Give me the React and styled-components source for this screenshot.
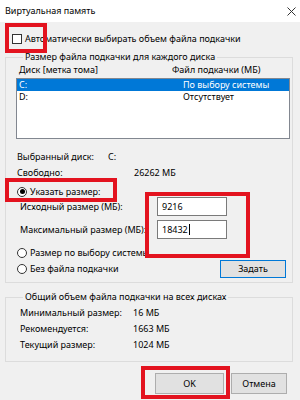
import React from "react";
import styled, { createGlobalStyle } from "styled-components";

const Global = createGlobalStyle`
  html, body { margin: 0; padding: 0; background: #f0f0f0; }
  body { font-family: "Noto Sans", "Open Sans", sans-serif; font-size: 9px; color: #000; }
  * { box-sizing: border-box; }
`;

const Dialog = styled.div`
  position: relative;
  width: 300px;
  height: 400px;
  overflow: hidden;
  background: #f0f0f0;
  display: flex;
  flex-direction: column;
`;

const TitleBar = styled.div`
  height: 22px;
  background: #fff;
  display: flex;
  align-items: center;
  justify-content: space-between;
  padding: 0 4px 0 5px;
  font-size: 9px;
  line-height: 12px;
  margin-bottom: -1px;
`;

const Body = styled.div`
  padding: 0 7px 0 5px;
  display: flex;
  flex-direction: column;
`;

const CheckRow = styled.label`
  display: flex;
  align-items: center;
  gap: 3px;
  height: 11px;
  margin-top: 12px;
  padding-left: 7px;
  line-height: 11px;
  white-space: nowrap;
`;

const CheckBox = styled.span`
  width: 10px;
  height: 10px;
  border: 1px solid #333;
  background: #fff;
  flex: none;
`;

const Group = styled.fieldset`
  margin: ${p => p.$mt}px 0 0 0;
  padding: ${p => p.$pt}px 1px ${p => p.$pb}px 10px;
  border: 1px solid #dcdcdc;
  min-width: 0;
  display: flex;
  flex-direction: column;
`;

const Legend = styled.legend`
  margin-left: 7px;
  padding: 0 2px;
  line-height: 12px;
  height: 12px;
  white-space: nowrap;
`;

const ColRow = styled.div`
  display: grid;
  grid-template-columns: ${p => p.$col}px 1fr;
  height: 12px;
  line-height: 12px;
  padding-left: ${p => p.$pl || 0}px;
  margin-top: ${p => p.$mt || 0}px;
  white-space: nowrap;
`;

const ListBox = styled.div`
  margin-top: 2px;
  height: 61px;
  background: #fff;
  border: 1px solid #828790;
  margin-right: 1px;
`;

const ListRow = styled.div`
  display: grid;
  grid-template-columns: 164px 1fr;
  height: 12px;
  line-height: 12px;
  padding-left: 2px;
  background: ${p => (p.$selected ? "#0078d7" : "transparent")};
  color: ${p => (p.$selected ? "#fff" : "#000")};
  white-space: nowrap;
`;

const RadioRow = styled.label`
  display: flex;
  align-items: center;
  gap: 3px;
  height: ${p => p.$h || 12}px;
  line-height: 12px;
  padding-left: 1px;
  margin-top: ${p => p.$mt || 0}px;
  white-space: nowrap;
`;

const Radio = styled.span`
  width: 10px;
  height: 10px;
  border-radius: 50%;
  border: 1px solid #333;
  background: #fff;
  flex: none;
  display: flex;
  align-items: center;
  justify-content: center;
  &::after {
    content: "";
    width: 5px;
    height: 5px;
    border-radius: 50%;
    background: ${p => (p.$checked ? "#000" : "transparent")};
  }
`;

const SizeRow = styled.div`
  display: grid;
  grid-template-columns: 137px 70px;
  align-items: center;
  height: 19px;
  padding-left: 4px;
  margin-top: ${p => p.$mt || 0}px;
  white-space: nowrap;
`;

const Input = styled.div`
  height: 19px;
  background: #fff;
  border: 1px solid #7a7a7a;
  padding-left: 4px;
  line-height: 17px;
  display: flex;
  align-items: center;
`;

const Caret = styled.span`
  width: 1px;
  height: 11px;
  background: #000;
  margin-left: 1px;
`;

const LastRow = styled.div`
  display: flex;
  justify-content: space-between;
  align-items: center;
  height: 18px;
  margin-top: 1px;
`;

const Button = styled.div`
  width: ${p => p.$w}px;
  height: ${p => p.$h || 18}px;
  background: #e1e1e1;
  border: 1px solid ${p => (p.$focus ? "#0078d7" : "#adadad")};
  display: flex;
  align-items: center;
  justify-content: center;
  line-height: 12px;
  margin-right: ${p => p.$mr || 0}px;
`;

const ButtonRow = styled.div`
  display: flex;
  justify-content: flex-end;
  gap: 7px;
  margin-top: 11px;
  padding-right: 6px;
`;

const Highlight = styled.div`
  position: absolute;
  left: ${p => p.$x}px;
  top: ${p => p.$y}px;
  width: ${p => p.$w}px;
  height: ${p => p.$h}px;
  border: 4px solid #e3131f;
  pointer-events: none;
`;

const CloseIcon = () => (
  <svg width="9" height="9" viewBox="0 0 9 9">
    <path d="M0.5 0.5 L8.5 8.5 M8.5 0.5 L0.5 8.5" stroke="#333" strokeWidth="1" fill="none" />
  </svg>
);

export default function App() {
  return (
    <>
      <Global />
      <Dialog>
        <TitleBar>
          <span>Виртуальная память</span>
          <CloseIcon />
        </TitleBar>
        <Body>
          <CheckRow>
            <CheckBox />
            <span>Автоматически выбирать объем файла подкачки</span>
          </CheckRow>

          <Group $mt={7} $pt={1} $pb={4}>
            <Legend>Размер файла подкачки для каждого диска</Legend>
            <ColRow $col={153} $pl={3}>
              <span>Диск [метка тома]</span>
              <span>Файл подкачки (МБ)</span>
            </ColRow>
            <ListBox>
              <ListRow $selected>
                <span>C:</span>
                <span>По выбору системы</span>
              </ListRow>
              <ListRow>
                <span>D:</span>
                <span>Отсутствует</span>
              </ListRow>
            </ListBox>
            <ColRow $col={91} $pl={1} $mt={12}>
              <span>Выбранный диск:</span>
              <span>C:</span>
            </ColRow>
            <ColRow $col={117} $pl={1} $mt={4}>
              <span>Свободно:</span>
              <span>26262 МБ</span>
            </ColRow>
            <RadioRow $mt={7} $h={11}>
              <Radio $checked />
              <span>Указать размер:</span>
            </RadioRow>
            <SizeRow>
              <span>Исходный размер (МБ):</span>
              <Input>9216</Input>
            </SizeRow>
            <SizeRow $mt={4}>
              <span>Максимальный размер (МБ):</span>
              <Input>
                18432
                <Caret />
              </Input>
            </SizeRow>
            <RadioRow $mt={8}>
              <Radio />
              <span>Размер по выбору системы</span>
            </RadioRow>
            <LastRow>
              <RadioRow>
                <Radio />
                <span>Без файла подкачки</span>
              </RadioRow>
              <Button $w={66} $focus $mr={5}>
                Задать
              </Button>
            </LastRow>
          </Group>

          <Group $mt={8} $pt={4} $pb={10}>
            <Legend>Общий объем файла подкачки на всех дисках</Legend>
            <ColRow $col={113} $pl={4}>
              <span>Минимальный размер:</span>
              <span>16 МБ</span>
            </ColRow>
            <ColRow $col={113} $pl={4} $mt={4}>
              <span>Рекомендуется:</span>
              <span>1663 МБ</span>
            </ColRow>
            <ColRow $col={113} $pl={4} $mt={4}>
              <span>Текущий размер:</span>
              <span>1024 МБ</span>
            </ColRow>
          </Group>

          <ButtonRow>
            <Button $w={69} $h={21}>OK</Button>
            <Button $w={56} $h={21}>Отмена</Button>
          </ButtonRow>
        </Body>

        <Highlight $x={5} $y={23} $w={42} $h={30} />
        <Highlight $x={5} $y={178} $w={112} $h={24} />
        <Highlight $x={145} $y={192} $w={105} $h={66} />
        <Highlight $x={141} $y={366} $w={89} $h={33} />
      </Dialog>
    </>
  );
}
